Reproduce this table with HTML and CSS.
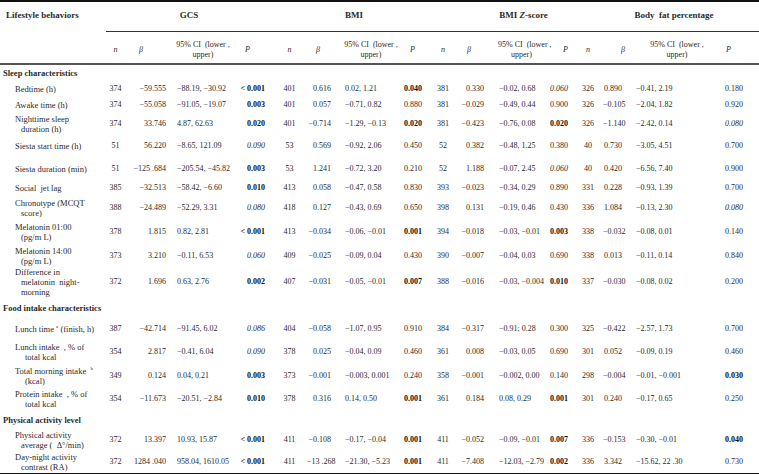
FILE: index.html
```html
<!DOCTYPE html>
<html>
<head>
<meta charset="utf-8">
<link rel="stylesheet" href="styles.css">
</head>
<body>
<table class="tbl">
<colgroup>
<col class="w106"><col class="w19"><col class="w45"><col class="w66"><col class="w36">
<col class="w35"><col class="w29"><col class="w62"><col class="w30">
<col class="w30"><col class="w32"><col class="w55"><col class="w28">
<col class="w30"><col class="w25"><col class="w84"><col class="w47">
</colgroup>
<thead>
<tr class="h1">
<th class="top-lab">Lifestyle behaviors</th>
<th colspan="4" class="grp g-gcs">GCS</th>
<th colspan="4" class="grp g-bmi">BMI</th>
<th colspan="4" class="grp g-z">BMI <i>Z</i>-score</th>
<th colspan="4" class="grp g-bf">Body&nbsp; fat percentage</th>
</tr>
<tr class="h2">
<th></th>
<th class="hn"><i>n</i></th><th class="hb hb1"><i>β</i></th><th class="hci">95% CI&nbsp; (lower ,<br>upper)</th><th class="hp hp1"><i>P</i></th>
<th class="hn"><i>n</i></th><th class="hb hb2"><i>β</i></th><th class="hci hci2">95% CI&nbsp; (lower ,<br>upper)</th><th class="hp hp2"><i>P</i></th>
<th class="hn"><i>n</i></th><th class="hb hb3"><i>β</i></th><th class="hci hci3">95% CI&nbsp; (lower ,<br>upper)</th><th class="hp hp3"><i>P</i></th>
<th class="hn"><i>n</i></th><th class="hb hb4"><i>β</i></th><th class="hci hci4">95% CI&nbsp; (lower ,<br>upper)</th><th class="hp hp4"><i>P</i></th>
</tr>
</thead>
<tbody class="data">
<tr class="r16 sec"><td colspan="17">Sleep characteristics</td></tr>
<tr class="r16"><td class="lab">Bedtime (h)</td>
<td>374</td><td>−59.555</td><td>−88.19, −30.92</td><td><b>&lt; 0.001</b></td>
<td>401</td><td>0.616</td><td>0.02, 1.21</td><td><b>0.040</b></td>
<td>381</td><td>0.330</td><td>−0.02, 0.68</td><td><i>0.060</i></td>
<td>326</td><td>0.890</td><td>−0.41, 2.19</td><td>0.180</td></tr>
<tr class="r16"><td class="lab">Awake time (h)</td>
<td>374</td><td>−55.058</td><td>−91.05, −19.07</td><td><b>0.003</b></td>
<td>401</td><td>0.057</td><td>−0.71, 0.82</td><td>0.880</td>
<td>381</td><td>−0.029</td><td>−0.49, 0.44</td><td>0.900</td>
<td>326</td><td>−0.105</td><td>−2.04, 1.82</td><td>0.920</td></tr>
<tr class="r21"><td class="lab">Nighttime sleep<br>duration (h)</td>
<td>374</td><td>33.746</td><td>4.87, 62.63</td><td><b>0.020</b></td>
<td>401</td><td>−0.714</td><td>−1.29, −0.13</td><td><b>0.020</b></td>
<td>381</td><td>−0.423</td><td>−0.76, 0.08</td><td><b>0.020</b></td>
<td>326</td><td>−1.140</td><td>−2.42, 0.14</td><td><i>0.080</i></td></tr>
<tr class="r24"><td class="lab">Siesta start time (h)</td>
<td>51</td><td>56.220</td><td>−8.65, 121.09</td><td><i>0.090</i></td>
<td>53</td><td>0.569</td><td>−0.92, 2.06</td><td>0.450</td>
<td>52</td><td>0.382</td><td>−0.48, 1.25</td><td>0.380</td>
<td>40</td><td>0.730</td><td>−3.05, 4.51</td><td>0.700</td></tr>
<tr class="r21"><td class="lab">Siesta duration (min)</td>
<td>51</td><td>−125 .684</td><td>−205.54, −45.82</td><td><b>0.003</b></td>
<td>53</td><td>1.241</td><td>−0.72, 3.20</td><td>0.210</td>
<td>52</td><td>1.188</td><td>−0.07, 2.45</td><td><i>0.060</i></td>
<td>40</td><td>0.420</td><td>−6.56, 7.40</td><td>0.900</td></tr>
<tr class="r18"><td class="lab">Social&nbsp; jet lag</td>
<td>385</td><td>−32.513</td><td>−58.42, −6.60</td><td><b>0.010</b></td>
<td>413</td><td>0.058</td><td>−0.47, 0.58</td><td>0.830</td>
<td>393</td><td>−0.023</td><td>−0.34, 0.29</td><td>0.890</td>
<td>331</td><td>0.228</td><td>−0.93, 1.39</td><td>0.700</td></tr>
<tr class="r22"><td class="lab">Chronotype (MCQT<br>score)</td>
<td>388</td><td>−24.489</td><td>−52.29, 3.31</td><td><i>0.080</i></td>
<td>418</td><td>0.127</td><td>−0.43, 0.69</td><td>0.650</td>
<td>398</td><td>0.131</td><td>−0.19, 0.46</td><td>0.430</td>
<td>336</td><td>1.084</td><td>−0.13, 2.30</td><td><i>0.080</i></td></tr>
<tr class="r25"><td class="lab">Melatonin 01:00<br>(pg/m L)</td>
<td>378</td><td>1.815</td><td>0.82, 2.81</td><td><b>&lt; 0.001</b></td>
<td>413</td><td>−0.034</td><td>−0.06, −0.01</td><td><b>0.001</b></td>
<td>394</td><td>−0.018</td><td>−0.03, −0.01</td><td><b>0.003</b></td>
<td>338</td><td>−0.032</td><td>−0.08, 0.01</td><td>0.140</td></tr>
<tr class="r23"><td class="lab">Melatonin 14:00<br>(pg/m L)</td>
<td>373</td><td>3.210</td><td>−0.11, 6.53</td><td><i>0.060</i></td>
<td>409</td><td>−0.025</td><td>−0.09, 0.04</td><td>0.430</td>
<td>390</td><td>−0.007</td><td>−0.04, 0.03</td><td>0.690</td>
<td>338</td><td>0.013</td><td>−0.11, 0.14</td><td>0.840</td></tr>
<tr class="r30"><td class="lab">Difference in<br>melatonin&nbsp; night-<br>morning</td>
<td>372</td><td>1.696</td><td>0.63, 2.76</td><td><b>0.002</b></td>
<td>407</td><td>−0.031</td><td>−0.05, −0.01</td><td><b>0.007</b></td>
<td>388</td><td>−0.016</td><td>−0.03, −0.004</td><td><b>0.010</b></td>
<td>337</td><td>−0.030</td><td>−0.08, 0.02</td><td>0.200</td></tr>
<tr class="r21 sec"><td colspan="17">Food intake characteristics</td></tr>
<tr class="r21"><td class="lab lab2">Lunch time <sup>a</sup> (finish, h)</td>
<td>387</td><td>−42.714</td><td>−91.45, 6.02</td><td><i>0.086</i></td>
<td>404</td><td>−0.058</td><td>−1.07, 0.95</td><td>0.910</td>
<td>384</td><td>−0.317</td><td>−0.91; 0.28</td><td>0.300</td>
<td>325</td><td>−0.422</td><td>−2.57, 1.73</td><td>0.700</td></tr>
<tr class="r25"><td class="lab lab2">Lunch intake&nbsp; , % of<br>total kcal</td>
<td>354</td><td>2.817</td><td>−0.41, 6.04</td><td><i>0.090</i></td>
<td>378</td><td>0.025</td><td>−0.04, 0.09</td><td>0.460</td>
<td>361</td><td>0.008</td><td>−0.03, 0.05</td><td>0.690</td>
<td>301</td><td>0.052</td><td>−0.09, 0.19</td><td>0.460</td></tr>
<tr class="r24"><td class="lab lab2">Total morning intake&nbsp; <sup>b</sup><br>(kcal)</td>
<td>349</td><td>0.124</td><td>0.04, 0.21</td><td><b>0.003</b></td>
<td>373</td><td>−0.001</td><td>−0.003, 0.001</td><td>0.240</td>
<td>358</td><td>−0.001</td><td>−0.002, 0.00</td><td>0.140</td>
<td>298</td><td>−0.004</td><td>−0.01, −0.001</td><td><b>0.030</b></td></tr>
<tr class="r22"><td class="lab lab2">Protein intake&nbsp; , % of<br>total kcal</td>
<td>354</td><td>−11.673</td><td>−20.51, −2.84</td><td><b>0.010</b></td>
<td>378</td><td>0.316</td><td>0.14, 0.50</td><td><b>0.001</b></td>
<td>361</td><td>0.184</td><td>0.08, 0.29</td><td><b>0.001</b></td>
<td>301</td><td>0.240</td><td>−0.17, 0.65</td><td>0.250</td></tr>
<tr class="r19 sec"><td colspan="17">Physical activity level</td></tr>
<tr class="r22"><td class="lab">Physical activity<br>average (&nbsp; Δ°/min)</td>
<td>372</td><td>13.397</td><td>10.93, 15.87</td><td><b>&lt; 0.001</b></td>
<td>411</td><td>−0.108</td><td>−0.17, −0.04</td><td><b>0.001</b></td>
<td>411</td><td>−0.052</td><td>−0.09, −0.01</td><td><b>0.007</b></td>
<td>336</td><td>−0.153</td><td>−0.30, −0.01</td><td><b>0.040</b></td></tr>
<tr class="r22"><td class="lab">Day-night activity<br>contrast (RA)</td>
<td>372</td><td>1284 .040</td><td>958.04, 1610.05</td><td><b>&lt; 0.001</b></td>
<td>411</td><td>−13 .268</td><td>−21.30, −5.23</td><td><b>0.001</b></td>
<td>411</td><td>−7.408</td><td>−12.03, −2.79</td><td><b>0.002</b></td>
<td>336</td><td>3.342</td><td>−15.62, 22 .30</td><td>0.730</td></tr>
</tbody>
</table>
</body>
</html>
```

FILE: styles.css
```css
html, body {
  margin: 0;
  padding: 0;
  background: #fff;
}
body {
  width: 759px;
  height: 474px;
  overflow: hidden;
  font-family: "Liberation Serif", "Times New Roman", serif;
  font-size: 8px;
  color: #2b2b2b;
}
.tbl {
  width: 759px;
  table-layout: fixed;
  border-collapse: collapse;
  border-top: 2px solid #111;
  border-bottom: 2px solid #111;
  opacity: 0.995;
}
.w106 { width: 106px; } .w19 { width: 19px; } .w45 { width: 45px; } .w66 { width: 66px; }
.w36 { width: 36px; } .w35 { width: 35px; } .w29 { width: 29px; } .w62 { width: 62px; }
.w30 { width: 30px; } .w32 { width: 32px; } .w55 { width: 55px; } .w28 { width: 28px; }
.w25 { width: 25px; } .w84 { width: 84px; } .w47 { width: 47px; }

th, td {
  padding: 0;
  white-space: nowrap;
  line-height: 10px;
  vertical-align: middle;
}
th { font-weight: bold; }
thead tr.h1 th {
  height: 26px;
  padding-bottom: 3px;
  font-size: 9px;
}
.top-lab { text-align: left; padding-left: 6px; }
.grp { text-align: center; border-bottom: 1px solid #333; }
.g-bmi { padding-left: 8px; }
.g-z { padding-left: 46px; }
.g-bf { padding-left: 16px; }

thead tr.h2 th {
  height: 26px;
  padding-top: 5px;
  font-weight: normal;
  border-bottom: 2px solid #555;
}
.hn { text-align: center; }
.hb { text-align: left; }
.hb1 { padding-left: 14px; }
.hb2 { padding-left: 9px; }
.hb3 { padding-left: 9px; }
.hb4 { padding-left: 18px; }
.hci { text-align: center; }
.hci2 { padding-left: 8px; }
.hci3 { padding-left: 8px; }
.hci4 { padding-left: 14px; }
.hp { text-align: left; }
.hp1 { padding-left: 9px; }
.hp2 { padding-left: 12px; }
.hp3 { padding-left: 18px; }
.hp4 { padding-left: 14px; }

.r16 td { height: 16px; }
.r18 td { height: 18px; }
.r19 td { height: 19px; }
.r21 td { height: 21px; }
.r22 td { height: 22px; }
.r23 td { height: 23px; }
.r24 td { height: 24px; }
.r25 td { height: 25px; }
.r30 td { height: 30px; }

.sec td {
  font-weight: bold;
  font-size: 8.5px;
  padding-left: 3px;
  text-align: left;
}
.lab {
  font-size: 8.5px;
  padding-left: 21px;
  text-indent: -6px;
  text-align: left;
}
.lab2 { padding-left: 25px; text-indent: -10px; }
sup { font-size: 5px; line-height: 0; vertical-align: 4px; }

.data td:nth-child(2),
.data td:nth-child(6),
.data td:nth-child(10),
.data td:nth-child(14) { text-align: center; }

.data td:nth-child(3) { text-align: right; padding-right: 4px; }
.data td:nth-child(7) { text-align: right; padding-right: 5px; }
.data td:nth-child(11) { text-align: right; padding-right: 6px; }
.data td:nth-child(15) { text-align: right; padding-right: 6px; }

.data td:nth-child(4) { text-align: left; padding-left: 7px; }
.data td:nth-child(8) { text-align: left; padding-left: 9px; }
.data td:nth-child(12) { text-align: left; padding-left: 9px; }
.data td:nth-child(16) { text-align: left; padding-left: 8px; }

.data td:nth-child(5) { text-align: right; padding-right: 7px; }
.data td:nth-child(9) { text-align: center; }
.data td:nth-child(13) { text-align: center; }
.data td:nth-child(17) { text-align: left; padding-left: 13px; }

b { color: #111; }
```
